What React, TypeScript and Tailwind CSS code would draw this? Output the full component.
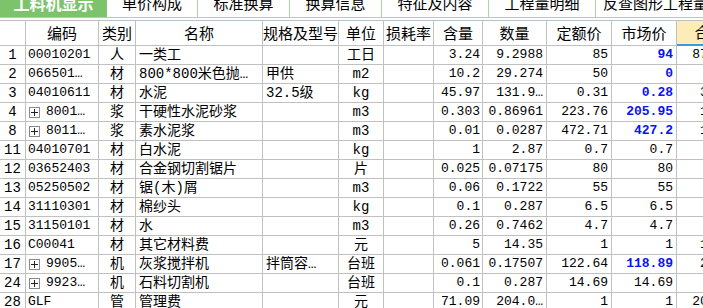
const tabs = ["单价构成", "标准换算", "换算信息", "特征及内容", "工程量明细", "反查图形工程量"];
const tabWidths = ["w-[91px]", "w-[92px]", "w-[92px]", "w-[107px]", "w-[107px]", "w-[120px]"];

const headers = ["", "编码", "类别", "名称", "规格及型号", "单位", "损耗率", "含量", "数量", "定额价", "市场价", "合价"];

type Row = {
  no: string;
  code: string;
  expand?: boolean;
  kind: string;
  name: string;
  spec: string;
  unit: string;
  content: string;
  qty: string;
  price: string;
  market: string;
  blue?: boolean;
  total: string;
};

const rows: Row[] = [
  { no: "1", code: "00010201", kind: "人", name: "一类工", spec: "", unit: "工日", content: "3.24", qty: "9.2988", price: "85", market: "94", blue: true, total: "874.09" },
  { no: "2", code: "066501…", kind: "材", name: "800*800米色抛…", spec: "甲供", unit: "m2", content: "10.2", qty: "29.274", price: "50", market: "0", blue: true, total: "0" },
  { no: "3", code: "04010611", kind: "材", name: "水泥", spec: "32.5级", unit: "kg", content: "45.97", qty: "131.9…", price: "0.31", market: "0.28", blue: true, total: "36.94" },
  { no: "4", code: "8001…", expand: true, kind: "浆", name: "干硬性水泥砂浆", spec: "", unit: "m3", content: "0.303", qty: "0.86961", price: "223.76", market: "205.95", blue: true, total: "179.1" },
  { no: "8", code: "8011…", expand: true, kind: "浆", name: "素水泥浆", spec: "", unit: "m3", content: "0.01", qty: "0.0287", price: "472.71", market: "427.2", blue: true, total: "12.26" },
  { no: "11", code: "04010701", kind: "材", name: "白水泥", spec: "", unit: "kg", content: "1", qty: "2.87", price: "0.7", market: "0.7", total: "2.01" },
  { no: "12", code: "03652403", kind: "材", name: "合金钢切割锯片", spec: "", unit: "片", content: "0.025", qty: "0.07175", price: "80", market: "80", total: "5.74" },
  { no: "13", code: "05250502", kind: "材", name: "锯(木)屑", spec: "", unit: "m3", content: "0.06", qty: "0.1722", price: "55", market: "55", total: "9.47" },
  { no: "14", code: "31110301", kind: "材", name: "棉纱头", spec: "", unit: "kg", content: "0.1", qty: "0.287", price: "6.5", market: "6.5", total: "1.87" },
  { no: "15", code: "31150101", kind: "材", name: "水", spec: "", unit: "m3", content: "0.26", qty: "0.7462", price: "4.7", market: "4.7", total: "3.51" },
  { no: "16", code: "C00041", kind: "材", name: "其它材料费", spec: "", unit: "元", content: "5", qty: "14.35", price: "1", market: "1", total: "14.35" },
  { no: "17", code: "9905…", expand: true, kind: "机", name: "灰浆搅拌机", spec: "拌筒容…", unit: "台班", content: "0.061", qty: "0.17507", price: "122.64", market: "118.89", blue: true, total: "20.81" },
  { no: "24", code: "9923…", expand: true, kind: "机", name: "石料切割机", spec: "", unit: "台班", content: "0.1", qty: "0.287", price: "14.69", market: "14.69", total: "4.22" },
  { no: "28", code: "GLF", kind: "管", name: "管理费", spec: "", unit: "元", content: "71.09", qty: "204.0…", price: "1", market: "1", total: "204.03" },
];

const grid =
  "grid grid-cols-[26px_73px_37px_127px_76px_45px_50px_49px_64px_65px_65px_66px]";
const cell = "border-r border-b border-[#c0c0c0] flex items-center overflow-hidden whitespace-nowrap";

function PlusBox() {
  return (
    <span className="mr-[6px] ml-[1px] inline-flex h-[11px] w-[11px] shrink-0 items-center justify-center border border-[#8a8a8a] bg-white">
      <svg width="7" height="7" viewBox="0 0 7 7">
        <path d="M0 3.5H7M3.5 0V7" stroke="#222" strokeWidth="1" />
      </svg>
    </span>
  );
}

export default function App() {
  return (
    <div
      className="h-[308px] w-[703px] overflow-hidden bg-white text-black"
      style={{ fontFamily: '"Liberation Mono", "Noto Sans CJK SC", monospace' }}
    >
      {/* tab strip, text clipped at the top as in the app */}
      <div className="flex h-[18px] overflow-hidden border-b border-[#a9d79c]">
        <div className="flex w-[107px] shrink-0 justify-center bg-[#7cc36b]">
          <span
            className="-mt-[5px] text-[16px] leading-none font-bold text-white"
            style={{ fontFamily: '"Noto Sans CJK SC", sans-serif' }}
          >
            工料机显示
          </span>
        </div>
        {tabs.map((t, i) => (
          <div
            key={t}
            className={`flex shrink-0 justify-center border-r border-[#a9d79c] ${tabWidths[i]}`}
          >
            <span
              className="-mt-[5px] text-[15px] leading-none"
              style={{ fontFamily: '"Noto Sans CJK SC", sans-serif' }}
            >
              {t}
            </span>
          </div>
        ))}
      </div>

      {/* table */}
      <div className="mt-[2px] w-[743px]">
        <div className={`${grid} h-[26px] border-t border-[#c0c0c0]`}>
          {headers.map((h, i) => (
            <div
              key={i}
              className={`${cell} justify-center text-[15px] ${
                i === 11 ? "border-b-2 border-b-[#3a9bd5] bg-[#fdebb8]" : ""
              }`}
              style={{ fontFamily: '"Noto Sans CJK SC", sans-serif' }}
            >
              {h}
            </div>
          ))}
        </div>

        {rows.map((r) => (
          <div key={r.no} className={`${grid} h-[19px] text-[13px]`}>
            <div className={`${cell} justify-center text-[14px]`}>{r.no}</div>
            <div className={`${cell} pl-[2px]`}>
              {r.expand && <PlusBox />}
              {r.code}
            </div>
            <div className={`${cell} justify-center text-[14px]`}>{r.kind}</div>
            <div className={`${cell} pl-[3px] text-[14px]`}>{r.name}</div>
            <div className={`${cell} pl-[3px] text-[14px]`}>{r.spec}</div>
            <div className={`${cell} justify-center text-[14px]`}>{r.unit}</div>
            <div className={cell}></div>
            <div className={`${cell} justify-end pr-[2px]`}>{r.content}</div>
            <div className={`${cell} justify-end pr-[3px]`}>{r.qty}</div>
            <div className={`${cell} justify-end pr-[3px]`}>{r.price}</div>
            <div
              className={`${cell} justify-end pr-[3px] ${r.blue ? "font-bold text-[#0a14f0]" : ""}`}
            >
              {r.market}
            </div>
            <div className={`${cell} justify-end pr-[3px]`}>{r.total}</div>
          </div>
        ))}
      </div>
    </div>
  );
}
